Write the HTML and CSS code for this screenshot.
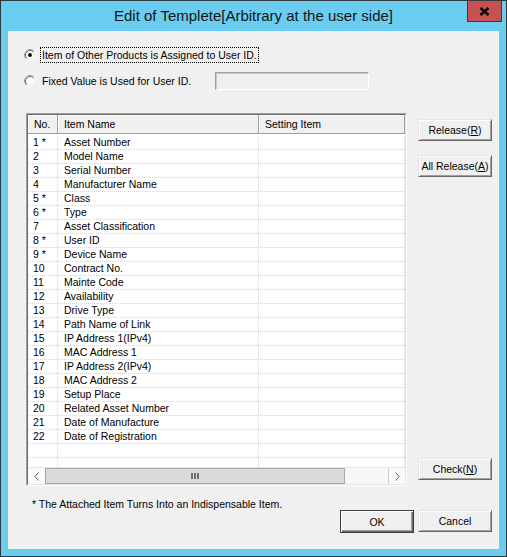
FILE: index.html
```html
<!DOCTYPE html>
<html lang="en">
<head>
<meta charset="utf-8">
<title>Edit of Templete</title>
<link rel="stylesheet" href="styles.css">
</head>
<body>
<div class="window">
  <div class="titlebar">
    <div class="title">Edit of Templete[Arbitrary at the user side]</div>
    <div class="close"><svg width="11" height="9" viewBox="0 0 11 9"><path d="M1.5 1 L9.5 8 M9.5 1 L1.5 8" stroke="#000" stroke-width="2.4" fill="none"/></svg></div>
  </div>
  <div class="client">
    <div class="radio-row r1">
      <span class="radio"><svg width="12" height="12" viewBox="0 0 12 12"><circle cx="6" cy="6" r="5.5" fill="none" stroke="#fff"/><path d="M2.11 9.89 A5.5 5.5 0 0 1 9.89 2.11" fill="none" stroke="#a0a0a0"/><circle cx="6" cy="6" r="4.5" fill="#fff" stroke="#e3e3e3"/><path d="M2.82 9.18 A4.5 4.5 0 0 1 9.18 2.82" fill="none" stroke="#696969"/><circle cx="6" cy="6" r="1.9" fill="#000"/></svg></span>
      <span class="label focus">Item of Other Products is Assigned to User ID.</span>
    </div>
    <div class="radio-row r2">
      <span class="radio"><svg width="12" height="12" viewBox="0 0 12 12"><circle cx="6" cy="6" r="5.5" fill="none" stroke="#fff"/><path d="M2.11 9.89 A5.5 5.5 0 0 1 9.89 2.11" fill="none" stroke="#a0a0a0"/><circle cx="6" cy="6" r="4.5" fill="#fff" stroke="#e3e3e3"/><path d="M2.82 9.18 A4.5 4.5 0 0 1 9.18 2.82" fill="none" stroke="#696969"/></svg></span>
      <span class="label plain">Fixed Value is Used for User ID.</span>
      <span class="textbox"></span>
    </div>
    <div class="main">
      <div class="listview">
        <div class="lv-inner">
          <div class="lv-header">
            <div class="hc">No.</div>
            <div class="hc">Item Name</div>
            <div class="hc">Setting Item</div>
          </div>
          <div class="lv-body">
            <div class="row"><div class="c-no">1 *</div><div class="c-name">Asset Number</div><div class="c-set"></div></div>
            <div class="row"><div class="c-no">2</div><div class="c-name">Model Name</div><div class="c-set"></div></div>
            <div class="row"><div class="c-no">3</div><div class="c-name">Serial Number</div><div class="c-set"></div></div>
            <div class="row"><div class="c-no">4</div><div class="c-name">Manufacturer Name</div><div class="c-set"></div></div>
            <div class="row"><div class="c-no">5 *</div><div class="c-name">Class</div><div class="c-set"></div></div>
            <div class="row"><div class="c-no">6 *</div><div class="c-name">Type</div><div class="c-set"></div></div>
            <div class="row"><div class="c-no">7</div><div class="c-name">Asset Classification</div><div class="c-set"></div></div>
            <div class="row"><div class="c-no">8 *</div><div class="c-name">User ID</div><div class="c-set"></div></div>
            <div class="row"><div class="c-no">9 *</div><div class="c-name">Device Name</div><div class="c-set"></div></div>
            <div class="row"><div class="c-no">10</div><div class="c-name">Contract No.</div><div class="c-set"></div></div>
            <div class="row"><div class="c-no">11</div><div class="c-name">Mainte Code</div><div class="c-set"></div></div>
            <div class="row"><div class="c-no">12</div><div class="c-name">Availability</div><div class="c-set"></div></div>
            <div class="row"><div class="c-no">13</div><div class="c-name">Drive Type</div><div class="c-set"></div></div>
            <div class="row"><div class="c-no">14</div><div class="c-name">Path Name of Link</div><div class="c-set"></div></div>
            <div class="row"><div class="c-no">15</div><div class="c-name">IP Address 1(IPv4)</div><div class="c-set"></div></div>
            <div class="row"><div class="c-no">16</div><div class="c-name">MAC Address 1</div><div class="c-set"></div></div>
            <div class="row"><div class="c-no">17</div><div class="c-name">IP Address 2(IPv4)</div><div class="c-set"></div></div>
            <div class="row"><div class="c-no">18</div><div class="c-name">MAC Address 2</div><div class="c-set"></div></div>
            <div class="row"><div class="c-no">19</div><div class="c-name">Setup Place</div><div class="c-set"></div></div>
            <div class="row"><div class="c-no">20</div><div class="c-name">Related Asset Number</div><div class="c-set"></div></div>
            <div class="row"><div class="c-no">21</div><div class="c-name">Date of Manufacture</div><div class="c-set"></div></div>
            <div class="row"><div class="c-no">22</div><div class="c-name">Date of Registration</div><div class="c-set"></div></div>
            <div class="row"><div class="c-no"></div><div class="c-name"></div><div class="c-set"></div></div>
            <div class="row"><div class="c-no"></div><div class="c-name"></div><div class="c-set"></div></div>
            <div class="row"><div class="c-no"></div><div class="c-name"></div><div class="c-set"></div></div>
          </div>
          <div class="hscroll">
            <div class="sb-btn"><svg width="5" height="9" viewBox="0 0 5 9"><path d="M4.5 0.5 L0.8 4.5 L4.5 8.5" fill="none" stroke="#606060"/></svg></div>
            <div class="sb-thumb"><svg width="8" height="6" viewBox="0 0 8 6"><rect x="0" y="0" width="2" height="6" fill="#707070"/><rect x="3" y="0" width="2" height="6" fill="#707070"/><rect x="6" y="0" width="2" height="6" fill="#707070"/></svg></div>
            <div class="sb-track"></div>
            <div class="sb-btn right"><svg width="5" height="9" viewBox="0 0 5 9"><path d="M0.5 0.5 L4.2 4.5 L0.5 8.5" fill="none" stroke="#606060"/></svg></div>
          </div>
        </div>
      </div>
      <div class="side">
        <div class="btn">Release(<u>R</u>)</div>
        <div class="btn">All Release(<u>A</u>)</div>
        <div class="btn check">Check(<u>N</u>)</div>
      </div>
    </div>
    <div class="bottom">
      <div class="note">* The Attached Item Turns Into an Indispensable Item.</div>
      <div class="actions">
        <div class="btn default">OK</div>
        <div class="btn">Cancel</div>
      </div>
    </div>
  </div>
</div>
</body>
</html>
```
FILE: styles.css
```css
* { box-sizing: border-box; }
html, body { margin: 0; padding: 0; }
body {
  width: 507px;
  height: 557px;
  overflow: hidden;
  font-family: "Liberation Sans", Arial, sans-serif;
  font-size: 10.5px;
  color: #000;
}
.window {
  width: 507px;
  height: 557px;
  border: 1px solid #2c3a40;
  background: #6acdf0;
  display: flex;
  flex-direction: column;
  padding: 0 7px 7px;
}
.titlebar {
  height: 30px;
  flex: none;
  margin: 0 -7px;
  display: grid;
  grid-template-columns: 1fr auto 1fr;
  align-items: start;
}
.title {
  grid-column: 2;
  font-size: 15px;
  line-height: 18px;
  padding-top: 6px;
  color: #141414;
  white-space: nowrap;
}
.close {
  grid-column: 3;
  justify-self: end;
  margin: -1px 4px 0 0;
  width: 35px;
  height: 22px;
  background: #c75050;
  border: 1px solid #3a3a3a;
  display: flex;
  align-items: center;
  justify-content: center;
}
.client {
  flex: 1;
  background: #f0f0f0;
  display: flex;
  flex-direction: column;
}
.radio-row {
  display: flex;
  align-items: center;
  padding-left: 16px;
}
.r1 { margin-top: 16px; height: 16px; }
.r2 { margin-top: 9px; height: 18px; }
.radio { width: 12px; height: 12px; margin-right: 4px; display: block; }
.radio svg { display: block; }
.label { line-height: 14px; white-space: nowrap; }
.label.focus { border: 1px dotted #000; padding: 0 1px; }
.label.plain { padding-left: 2px; width: 175px; }
.textbox {
  width: 154px;
  height: 18px;
  background: #f0f0f0;
  border: 1px solid;
  border-color: #a0a0a0 #fff #fff #a0a0a0;
  box-shadow: inset 1px 1px 0 #c8c8c8;
}
.main {
  margin-top: 23px;
  height: 373px;
  display: flex;
  padding-left: 18px;
}
.listview {
  width: 381px;
  height: 100%;
  border: 1px solid;
  border-color: #a0a0a0 #fff #fff #a0a0a0;
}
.lv-inner {
  height: 100%;
  border: 1px solid;
  border-color: #696969 #e3e3e3 #e3e3e3 #696969;
  background: #fff;
  display: flex;
  flex-direction: column;
  overflow: hidden;
}
.lv-header, .row {
  display: grid;
  grid-template-columns: 30px 201px 1fr;
}
.lv-header { height: 19px; flex: none; background: #f0f0f0; }
.hc {
  border-right: 1px solid #a0a0a0;
  border-bottom: 1px solid #a0a0a0;
  box-shadow: inset 1px 1px 0 #fff;
  padding-left: 6px;
  line-height: 18px;
  white-space: nowrap;
}
.lv-body { flex: 1; overflow: hidden; padding-top: 2px; }
.row {
  height: 14px;
  border-bottom: 1px dotted #d6d6d6;
  line-height: 13px;
  white-space: nowrap;
}
.row > div { border-right: 1px dotted #d6d6d6; }
.c-no { padding-left: 5px; }
.c-name { padding-left: 6px; }
.hscroll {
  height: 17px;
  flex: none;
  display: flex;
  background: #f7f7f7;
  border-top: 1px solid #e6e6e6;
}
.sb-btn {
  width: 17px;
  display: flex;
  align-items: center;
  justify-content: center;
  background: #fbfbfb;
}
.sb-btn.right { border-left: 1px solid #d0d0d0; }
.sb-thumb {
  width: 300px;
  background: #dadada;
  border: 1px solid #a8a8a8;
  display: flex;
  align-items: center;
  justify-content: center;
}
.sb-track { flex: 1; background: #f7f7f7; }
.side {
  width: 74px;
  margin-left: 11px;
  display: flex;
  flex-direction: column;
  padding: 6px 0;
  gap: 14px;
}
.btn {
  width: 74px;
  height: 22px;
  background: #f0f0f0;
  border: 1px solid;
  border-color: #e3e3e3 #696969 #696969 #e3e3e3;
  box-shadow: inset 1px 1px 0 #fff, inset -1px -1px 0 #a0a0a0;
  display: flex;
  align-items: center;
  justify-content: center;
  line-height: 14px;
  white-space: nowrap;
}
.btn u { text-decoration: underline; text-underline-offset: 1px; }
.side .check { margin-top: auto; }
.btn.default {
  height: 23px;
  border: 1px solid #3c3c3c;
  box-shadow: inset 1px 1px 0 #fff, inset -1px -1px 0 #696969, inset -2px -2px 0 #a0a0a0;
}
.bottom {
  margin-top: 11px;
  display: grid;
  grid-template-columns: 1fr auto;
  padding: 0 7px 0 24px;
}
.note { line-height: 14px; white-space: nowrap; }
.actions {
  display: flex;
  gap: 4px;
  padding-top: 13px;
}
```
